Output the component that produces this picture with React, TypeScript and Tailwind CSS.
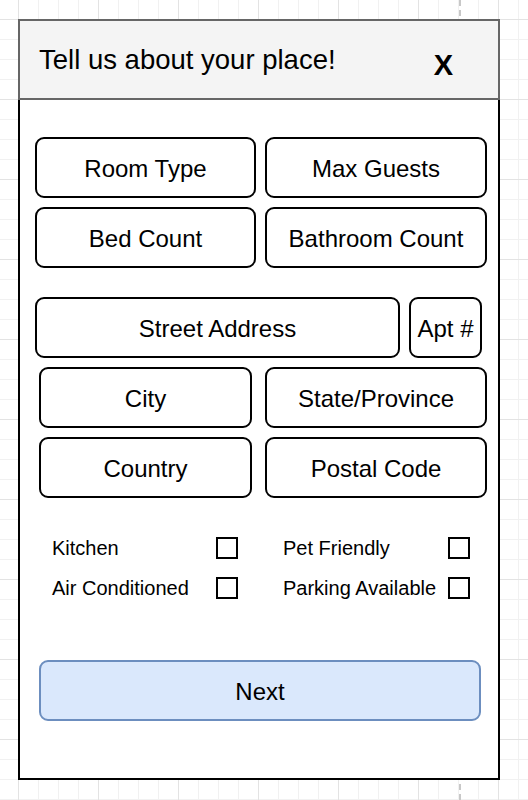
import React from 'react';

const fieldClass =
  'flex items-center justify-center h-[61px] pt-[3px] border-2 border-black rounded-[9px] text-[24px] text-black bg-white';

function Field({ label, className }: { label: string; className: string }) {
  return <div className={`${fieldClass} ${className}`}>{label}</div>;
}

function CheckRow({ left, right }: { left: string; right: string }) {
  return (
    <div className="flex items-center h-[22px] ml-[32px]">
      <span className="w-[164px] text-[20px] leading-none">{left}</span>
      <div className="w-[22px] h-[22px] border-2 border-black" />
      <span className="w-[165px] ml-[45px] text-[20px] leading-none">{right}</span>
      <div className="w-[22px] h-[22px] border-2 border-black" />
    </div>
  );
}

export default function App() {
  return (
    <div
      className="relative w-[528px] h-[800px] overflow-hidden bg-white pt-[19px] pl-[18px] font-['Liberation_Sans',Arial,sans-serif] text-black
        bg-[linear-gradient(to_right,#e3e3e3_1px,transparent_1px),linear-gradient(to_bottom,#e3e3e3_1px,transparent_1px),linear-gradient(to_right,#f1f1f1_1px,transparent_1px),linear-gradient(to_bottom,#f1f1f1_1px,transparent_1px)]
        [background-size:80px_80px,80px_80px,20px_20px,20px_20px]
        [background-position:18px_19px]"
    >
      {/* page break marker */}
      <div className="absolute left-[459px] top-0 h-full border-l-2 border-dashed border-[#c8c8c8]" />

      <div className="relative flex flex-col w-[482px]">
        <div className="flex items-center h-[81px] border-2 border-[#666666] bg-[#f4f4f4] pl-[19px] pr-[45px]">
          <span className="text-[27.5px] leading-none mt-[1px]">Tell us about your place!</span>
          <span className="ml-auto mt-[12px] text-[29px] font-bold leading-none">X</span>
        </div>

        <div className="flex flex-col h-[680px] bg-white border-2 border-t-0 border-black pt-[37px]">
          <div className="flex gap-[9px] ml-[15px]">
            <Field label="Room Type" className="w-[221px]" />
            <Field label="Max Guests" className="w-[222px]" />
          </div>
          <div className="flex gap-[9px] ml-[15px] mt-[9px]">
            <Field label="Bed Count" className="w-[221px]" />
            <Field label="Bathroom Count" className="w-[222px]" />
          </div>

          <div className="flex gap-[9px] ml-[15px] mt-[29px]">
            <Field label="Street Address" className="w-[365px]" />
            <Field label="Apt #" className="w-[73px]" />
          </div>
          <div className="flex gap-[13px] ml-[19px] mt-[9px]">
            <Field label="City" className="w-[213px]" />
            <Field label="State/Province" className="w-[222px]" />
          </div>
          <div className="flex gap-[13px] ml-[19px] mt-[9px]">
            <Field label="Country" className="w-[213px]" />
            <Field label="Postal Code" className="w-[222px]" />
          </div>

          <div className="flex flex-col gap-[18px] mt-[39px]">
            <CheckRow left="Kitchen" right="Pet Friendly" />
            <CheckRow left="Air Conditioned" right="Parking Available" />
          </div>

          <button className="ml-[19px] mt-[61px] w-[442px] h-[61px] pt-[2px] flex items-center justify-center bg-[#dae8fc] border-2 border-[#6c8ebf] rounded-[9px] text-[24px]">
            Next
          </button>
        </div>
      </div>
    </div>
  );
}
